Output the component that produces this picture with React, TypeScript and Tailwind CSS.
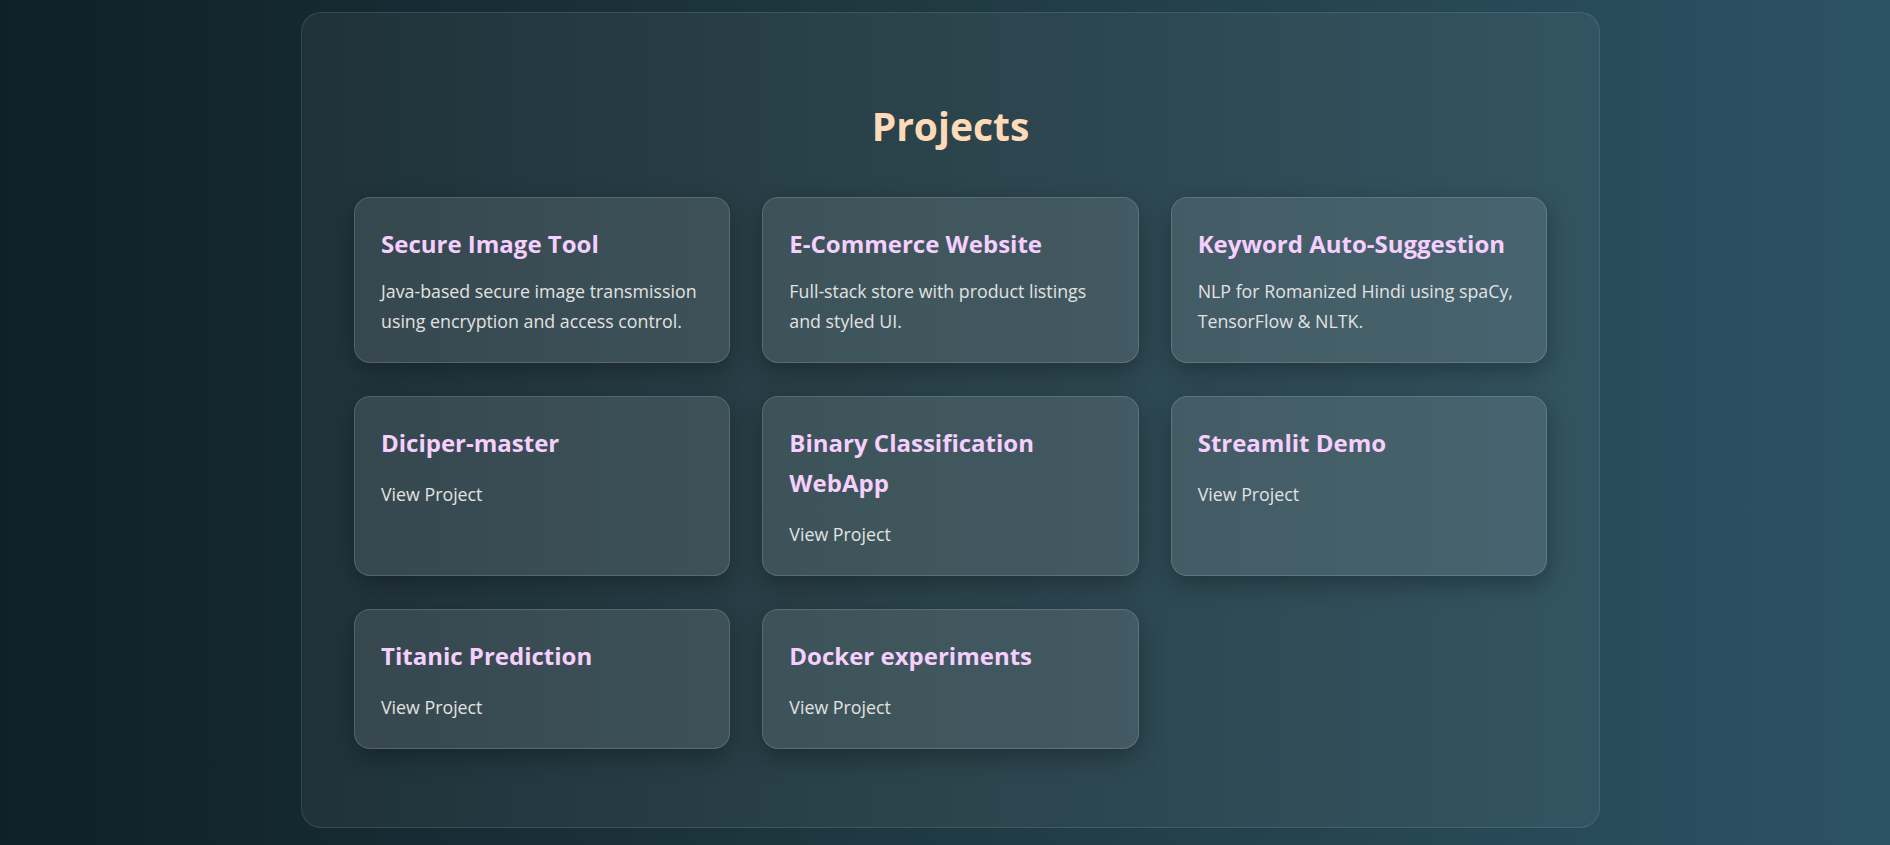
const projects = [
  {
    title: 'Secure Image Tool',
    desc: 'Java-based secure image transmission using encryption and access control.',
  },
  {
    title: 'E-Commerce Website',
    desc: 'Full-stack store with product listings and styled UI.',
  },
  {
    title: 'Keyword Auto-Suggestion',
    desc: 'NLP for Romanized Hindi using spaCy, TensorFlow & NLTK.',
  },
  { title: 'Diciper-master', link: 'View Project' },
  { title: 'Binary Classification WebApp', link: 'View Project' },
  { title: 'Streamlit Demo', link: 'View Project' },
  { title: 'Titanic Prediction', link: 'View Project' },
  { title: 'Docker experiments', link: 'View Project' },
];

const ProjectCard = ({ title, desc, link }: { title: string; desc?: string; link?: string }) => (
  <div className="rounded-2xl border border-white/15 bg-white/10 px-[26px] pt-[26px] pb-[26px] shadow-[0_8px_24px_rgba(0,0,0,0.3)]">
    <h3 className="text-[24px] leading-[40px] font-bold text-[#f5d0fe]">{title}</h3>
    {desc && <p className="mt-[12px] text-[17.8px] leading-[30px] text-[#e2e2e2]">{desc}</p>}
    {link && (
      <a href="#" className="mt-[16px] block text-[17.8px] leading-[30px] text-[#e2e2e2]">
        {link}
      </a>
    )}
  </div>
);

export default function App() {
  return (
    <div
      className="min-h-screen bg-gradient-to-r from-[#0f2027] via-[#203a43] to-[#2c5364] pt-[12px] pb-[17px] pl-[11px]"
      style={{ fontFamily: '"Open Sans", "Noto Sans", sans-serif' }}
    >
      <section className="mx-auto w-[1299px] rounded-[20px] border border-white/10 bg-white/5 px-[52px] pt-[89px] pb-[78px]">
        {/* Heading */}
        <h2 className="text-center text-[39px] leading-[48px] font-bold text-[#ffdab9]">Projects</h2>

        {/* Project grid */}
        <div className="mt-[47px] grid grid-cols-3 gap-x-[32px] gap-y-[33px]">
          {projects.map((p) => (
            <ProjectCard key={p.title} {...p} />
          ))}
        </div>
      </section>
    </div>
  );
}
